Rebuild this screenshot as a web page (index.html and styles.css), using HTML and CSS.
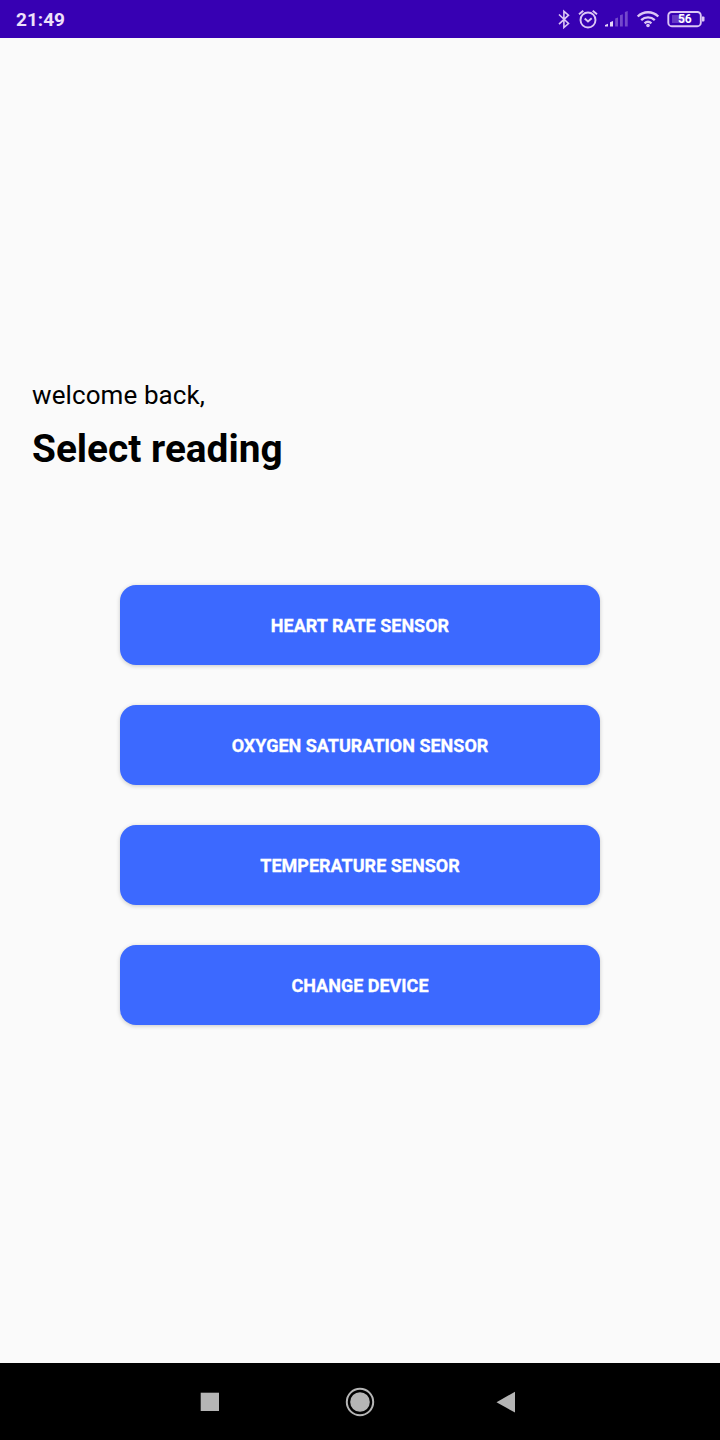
FILE: index.html
```html
<!DOCTYPE html>
<html lang="en">
<head>
<meta charset="utf-8">
<title>Select reading</title>
<link rel="stylesheet" href="styles.css">
</head>
<body>
<div class="screen">
  <header class="status">
    <span class="clock">21:49</span>
    <div class="status-icons">
      <svg class="line bluetooth" width="16" height="38" viewBox="556 0 16 38"><path d="M559 14.500l9.500 9-4.600 4V11.300l4.600 3.900L559 24.200"/></svg>
      <svg class="line" width="22" height="38" viewBox="577 0 22 38"><circle cx="588" cy="20" r="7.500"/><path d="M584.700 18.500l3.300 3 3.700-3.200M579 14.300l4.300-3.500M597 14.300l-4.300-3.500"/></svg>
      <svg class="signal" width="24" height="38" viewBox="604 0 24 38"><path d="M605 26.500v-1.500l3-1.300v2.800zM610 22.300l3-1.300v5.500h-3z"/><path class="dim" d="M615.200 18.500l2.800-1v9h-2.800zM620 15.200l2.800-1v12.300H620zM624.900 12l2.800-1v15.500h-2.800z"/></svg>
      <svg class="line wifi" width="24" height="38" viewBox="636 0 24 38"><path d="M637.700 16.500c5.800-5.700 14.800-5.700 20.600 0M641.200 20.100c3.800-3.700 9.800-3.700 13.600 0M644.600 23.300c2-1.900 4.800-1.900 6.800 0"/><circle class="dot" cx="648" cy="25.500" r="1.800"/></svg>
      <svg class="line" width="39" height="38" viewBox="667 0 39 38"><rect x="668.300" y="12" width="32.500" height="14.200" rx="3.500"/><rect class="charge" x="672" y="15" width="13" height="8"/><path class="cap" d="M702 16.500h1.500a1 1 0 0 1 1 1v3a1 1 0 0 1-1 1H702z"/><text class="percent" x="684.800" y="23.200">56</text></svg>
    </div>
  </header>
  <main class="content">
    <p class="welcome">welcome back,</p>
    <h1 class="title">Select reading</h1>
    <div class="actions">
      <button class="action">HEART RATE SENSOR</button>
      <button class="action">OXYGEN SATURATION SENSOR</button>
      <button class="action">TEMPERATURE SENSOR</button>
      <button class="action">CHANGE DEVICE</button>
    </div>
  </main>
  <nav class="navbar">
    <svg width="30" height="30" viewBox="0 0 30 30"><path d="M5.700 5.700h18.300v18.300H5.700z"/></svg>
    <svg width="30" height="30" viewBox="0 0 30 30"><circle class="ring" cx="15" cy="15" r="13.200"/><circle cx="15" cy="15" r="9.800"/></svg>
    <svg width="30" height="30" viewBox="0 0 30 30"><path d="M1.500 15.200L20 4.800v20.800z"/></svg>
  </nav>
</div>
</body>
</html>
```

FILE: styles.css
```css
* { box-sizing: border-box; }
body { margin: 0; font-family: Roboto, sans-serif; }
.screen {
  display: flex;
  flex-direction: column;
  width: 720px;
  height: 1440px;
  background: #fafafa;
}
.status {
  display: flex;
  justify-content: space-between;
  height: 38px;
  padding: 0 14px 0 16px;
  background: #3700b3;
}
.clock {
  color: #eee0fa;
  font-size: 19px;
  font-weight: 700;
  line-height: 39px;
}
.status-icons { display: flex; }
.status-icons svg { display: block; }
.line { fill: none; stroke: #dcc6f5; stroke-width: 1.9; margin-right: 5px; }
.bluetooth { stroke-width: 1.6; }
.signal { fill: #e6d6f7; margin: 0 8px 0 0; }
.dim { fill: #7448cc; }
.wifi { stroke-width: 2.3; margin-right: 7px; }
.dot { fill: #dcc6f5; stroke: none; }
.line:last-child { margin-right: 0; }
.charge { fill: #6537c6; stroke: none; }
.cap { fill: #dcc6f5; stroke: none; }
.percent {
  fill: #fff;
  stroke: none;
  font-size: 12px;
  font-weight: 700;
  text-anchor: middle;
}
.content { flex: 1; padding: 339px 32px 0; }
.welcome {
  margin: 0;
  color: #000;
  font-size: 26px;
  line-height: 36px;
  letter-spacing: 0.1px;
}
.title {
  margin: 11px 0 0;
  color: #000;
  font-size: 38.800px;
  font-weight: 700;
  line-height: 50px;
}
.actions {
  display: flex;
  flex-direction: column;
  gap: 40px;
  padding: 111px 88px 0;
}
.action {
  height: 80px;
  padding: 0;
  border: 0;
  border-radius: 16px;
  background: #3c69ff;
  box-shadow: 0 1px 4px rgba(0, 0, 0, 0.2);
  color: #fff;
  font-family: inherit;
  font-size: 18px;
  font-weight: 700;
  -webkit-text-stroke: 0.3px #fff;
}
.navbar {
  display: flex;
  justify-content: center;
  align-items: center;
  gap: 120px;
  height: 77px;
  background: #000;
}
.navbar svg { fill: #b5b5b5; }
.ring { fill: none; stroke: #b5b5b5; stroke-width: 2; }
```
